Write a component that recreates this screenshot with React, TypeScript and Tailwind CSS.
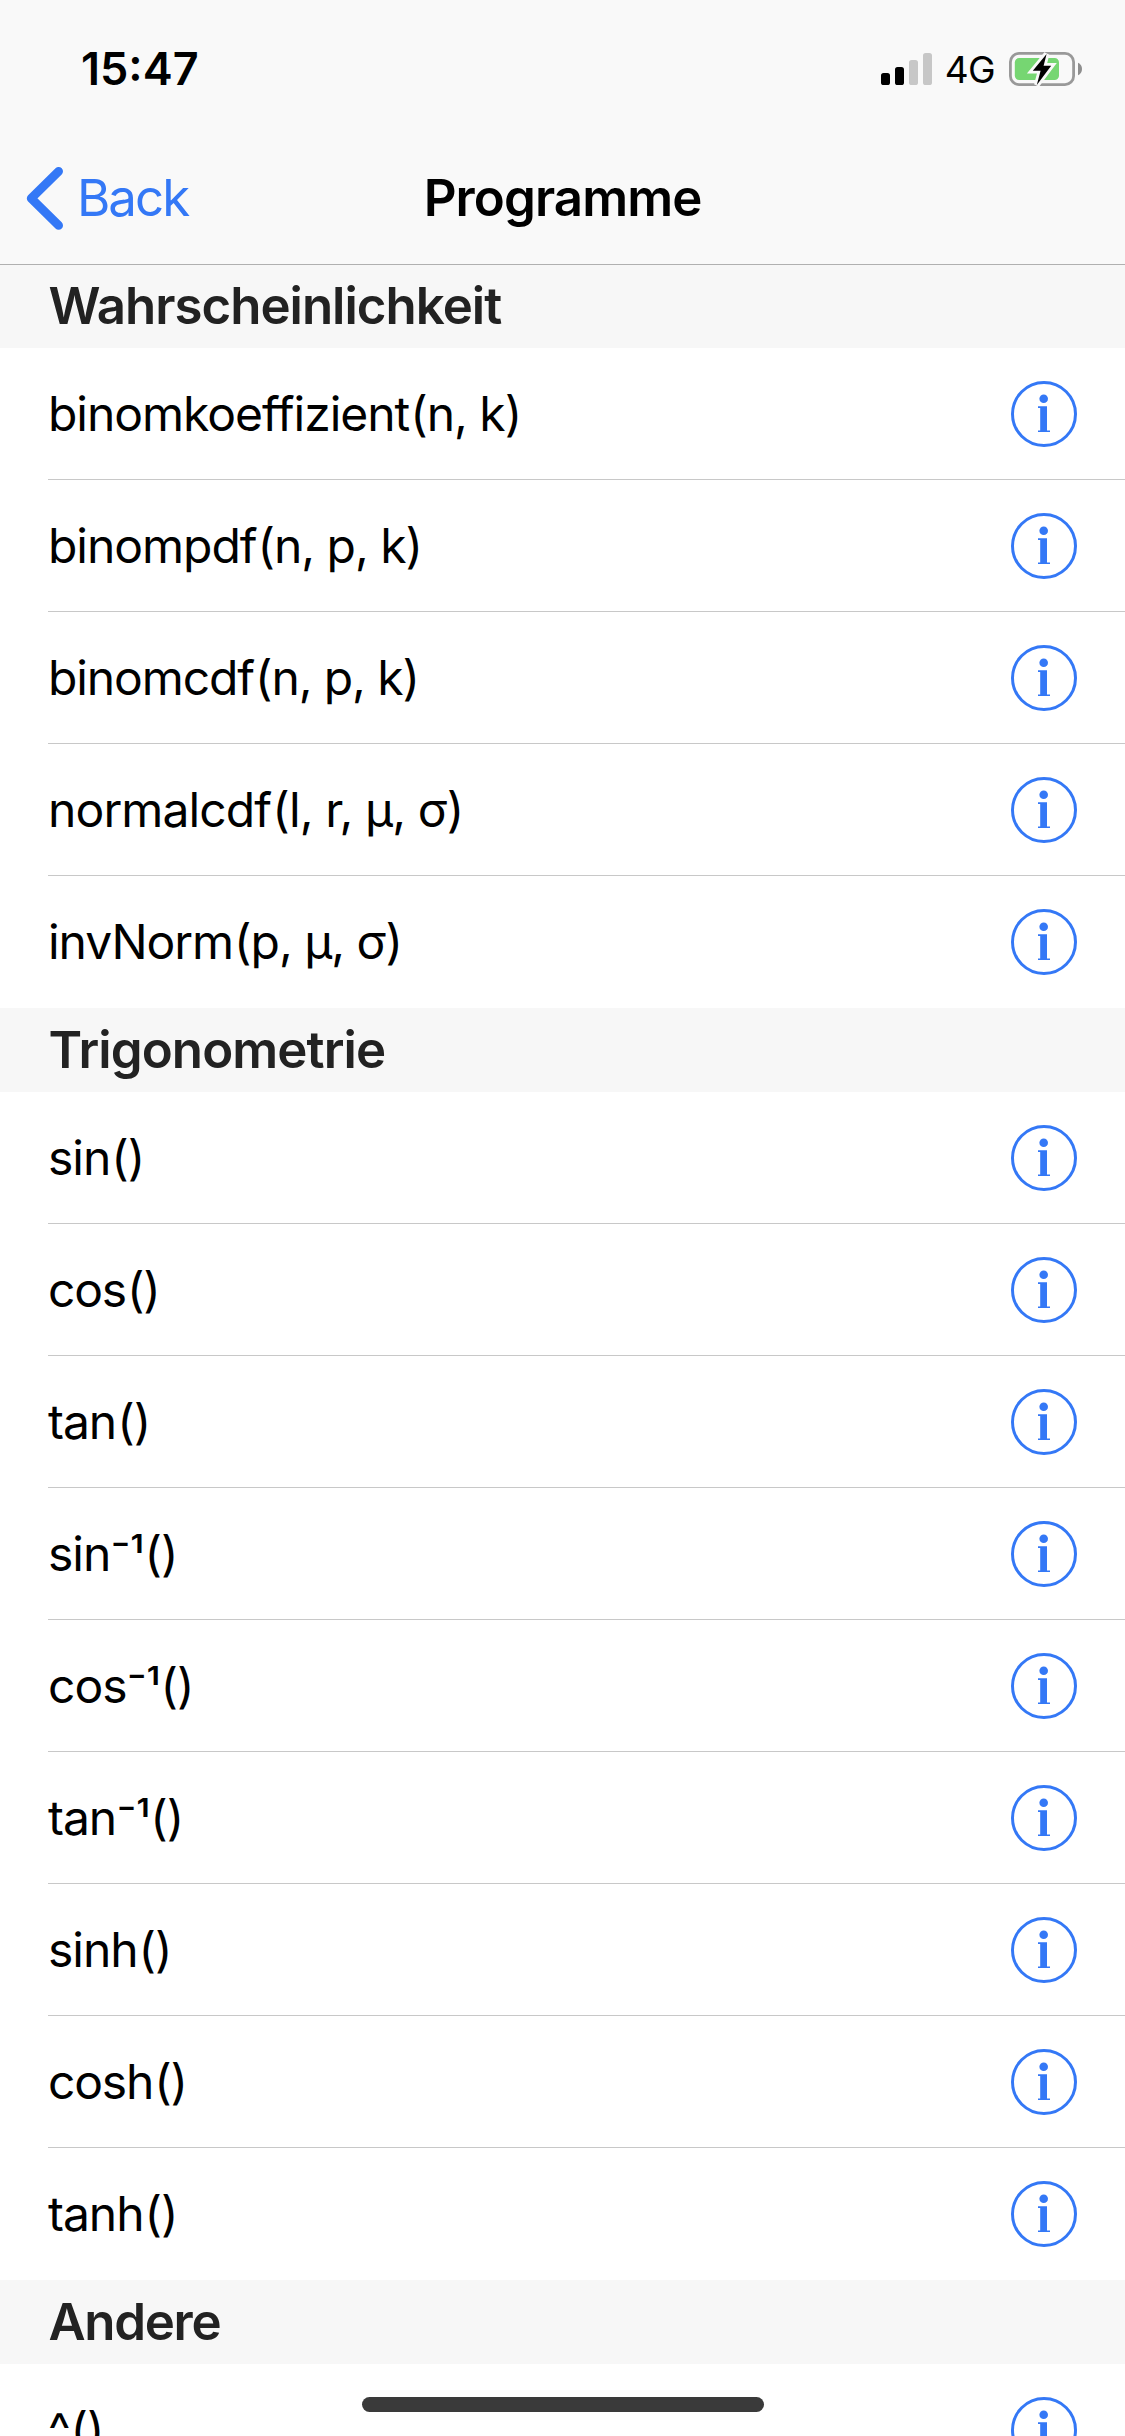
type Item = { name: string; power?: string; args: string; tracking?: string };
type Section = { title: string; tracking: string; items: Item[] };

const sections: Section[] = [
  {
    title: "Wahrscheinlichkeit",
    tracking: "tracking-[-1px]",
    items: [
      { name: "binomkoeffizient", args: "n, k" },
      { name: "binompdf", args: "n, p, k" },
      { name: "binomcdf", args: "n, p, k", tracking: "tracking-[-1.1px]" },
      { name: "normalcdf", args: "l, r, μ, σ", tracking: "tracking-[-0.88px]" },
      { name: "invNorm", args: "p, μ, σ" },
    ],
  },
  {
    title: "Trigonometrie",
    tracking: "tracking-[-0.9px]",
    items: [
      { name: "sin", args: "" },
      { name: "cos", args: "", tracking: "tracking-[-1.2px]" },
      { name: "tan", args: "" },
      { name: "sin", power: "⁻¹", args: "" },
      { name: "cos", power: "⁻¹", args: "" },
      { name: "tan", power: "⁻¹", args: "" },
      { name: "sinh", args: "" },
      { name: "cosh", args: "", tracking: "tracking-[-1.2px]" },
      { name: "tanh", args: "" },
    ],
  },
  { title: "Andere", tracking: "tracking-[-1.3px]", items: [{ name: "^", args: "" }] },
];

function InfoIcon() {
  return (
    <svg width="66" height="66" viewBox="0 0 66 66" className="shrink-0 text-[#3478f6]" fill="currentColor">
      <circle cx="33" cy="33" r="31.5" fill="none" stroke="currentColor" strokeWidth="3" />
      <circle cx="32.7" cy="17.7" r="4.3" />
      <path d="M27 25.2H36V49.4H39V51H27V49.4H29.2V26.9H27Z" />
    </svg>
  );
}

function SignalIcon() {
  return (
    <svg width="51" height="32" viewBox="0 0 51 32">
      <rect x="0" y="20" width="9" height="12" rx="2.6" />
      <rect x="14" y="14" width="9" height="18" rx="2.6" />
      <rect x="28" y="7" width="9" height="25" rx="2.6" fill="#c7c7c7" />
      <rect x="42" y="0" width="9" height="32" rx="2.6" fill="#c7c7c7" />
    </svg>
  );
}

function BatteryIcon() {
  const bolt = "M38.6 4 24.8 20.8H32.6L28.8 35 43.2 15.8H35.6Z";
  return (
    <svg width="75" height="38" viewBox="0 0 75 38">
      <rect x="2.4" y="3.4" width="63.2" height="31.2" rx="8.6" fill="none" stroke="#999999" strokeWidth="2.8" />
      <rect x="6.8" y="8" width="44.2" height="22" rx="4.4" fill="#76d672" />
      <path d="M70 12.7C72.6 13.8 74 16.2 74 19S72.6 24.2 70 25.3Z" fill="#8e8e8e" />
      <path d={bolt} fill="#f9f9f9" stroke="#f9f9f9" strokeWidth="5.6" />
      <path d={bolt} fill="#000" />
    </svg>
  );
}

function Row({ item, last }: { item: Item; last: boolean }) {
  return (
    <li className="pl-[48px]">
      <div
        className={`flex h-[132px] justify-between border-b pr-[48px] ${
          last ? "border-transparent" : "border-[#c8c8c8]"
        }`}
      >
        <span className={`text-[48px] leading-[131px] ${item.tracking ?? "tracking-[-1.03px]"}`}>
          {item.name}
          {item.power && <span className="inline-block translate-y-[3px]">{item.power}</span>}
          <span className="ml-[1px]">(</span>
          {item.args})
        </span>
        <div className="mt-[33px]">
          <InfoIcon />
        </div>
      </div>
    </li>
  );
}

export default function App() {
  return (
    <div className="relative h-[2436px] w-[1125px] overflow-hidden bg-white font-['Inter','Noto_Sans',sans-serif] text-black">
      <header className="relative z-10 h-[264px] bg-[#f9f9f9] shadow-[0_1px_0_#b0b0b0]">
        <div className="flex h-[132px] items-start justify-between pr-[42px] pl-[81px]">
          <span className="mt-[36px] text-[45px] leading-[65px] font-semibold">15:47</span>
          <div className="flex items-start">
            <div className="mt-[53px]">
              <SignalIcon />
            </div>
            <span className="mt-[46px] ml-[13px] text-[37px] leading-[48px] tracking-[-0.6px]">4G</span>
            <div className="mt-[50px] ml-[13px]">
              <BatteryIcon />
            </div>
          </div>
        </div>
        <div className="grid h-[132px] grid-cols-[1fr_auto_1fr] items-start text-[51px] leading-[131px]">
          <div className="flex items-start pl-[26px] text-[#3478f6]">
            <svg width="38" height="64" viewBox="0 0 38 64" className="mt-[34px]" fill="none">
              <path
                d="M32.6 5.3 5.2 32.3 32.6 59.4"
                stroke="currentColor"
                strokeWidth="8.8"
                strokeLinecap="round"
                strokeLinejoin="round"
              />
            </svg>
            <span className="ml-[13px] tracking-[-2px]">Back</span>
          </div>
          <h1 className="font-semibold tracking-[-0.92px]">Programme</h1>
        </div>
      </header>
      <main>
        {sections.map((section) => (
          <section key={section.title}>
            <h2
              className={`h-[84px] bg-[#f7f7f7] pl-[48.5px] text-[51px] leading-[83px] font-semibold text-[#222222] ${section.tracking}`}
            >
              {section.title}
            </h2>
            <ul>
              {section.items.map((item, i) => (
                <Row key={i} item={item} last={i === section.items.length - 1} />
              ))}
            </ul>
          </section>
        ))}
      </main>
      <div className="absolute bottom-[24px] left-[362px] z-20 h-[15px] w-[402px] rounded-full bg-[#3a3a3a]" />
    </div>
  );
}
